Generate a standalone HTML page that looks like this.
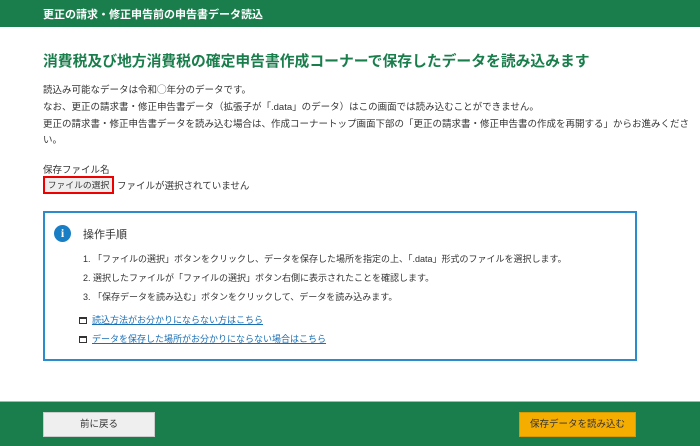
<!DOCTYPE html>
<html><head><meta charset="utf-8"><style>
*{margin:0;padding:0;box-sizing:border-box}
body{width:700px;height:446px;overflow:hidden;background:#fff;font-family:"Liberation Sans","Noto Sans CJK JP",sans-serif;color:#333;position:relative}
.a{position:absolute;white-space:nowrap}
.hd{position:absolute;left:0;top:0;width:700px;height:27px;background:#1a7e4c;color:#fff;font-size:11px;font-weight:bold;padding:6px 0 0 43px}
.t{font-size:14.8px;font-weight:bold;color:#1a7e4c;left:43px;top:50px}
.p{font-size:9.5px;left:43px;color:#333}
.box{position:absolute;left:43px;top:211px;width:594px;height:150px;border:2px solid #2a8ccc}
.box .p{font-size:9px}
.ft{position:absolute;left:0;top:401px;width:700px;height:45px;background:#1a7e4c;border-top:1px solid #9bbfaa}
.btn{position:absolute;top:10px;height:25px;font-size:9.5px;text-align:center;line-height:23px;border:1px solid #ccc}
a{color:#1a6fb5;text-decoration:underline}
.ic{display:inline-block;width:8px;height:7px;border:1.5px solid #333;border-top-width:2.5px;margin-right:5px;vertical-align:-1px}
</style></head><body>
<div class="hd">更正の請求・修正申告前の申告書データ読込</div>
<div class="a t">消費税及び地方消費税の確定申告書作成コーナーで保存したデータを読み込みます</div>
<div class="a p" style="top:82px">読込み可能なデータは令和◯年分のデータです。</div>
<div class="a p" style="top:99px">なお、更正の請求書・修正申告書データ（拡張子が「.data」のデータ）はこの画面では読み込むことができません。</div>
<div class="a p" style="top:116px">更正の請求書・修正申告書データを読み込む場合は、作成コーナートップ画面下部の「更正の請求書・修正申告書の作成を再開する」からお進みくださ</div>
<div class="a p" style="top:132px">い。</div>
<div class="a p" style="top:162px">保存ファイル名</div>
<div class="a" style="left:43px;top:176px;width:71px;height:18px;border:2px solid #e00;background:#eee;font-size:8.8px;text-align:center;line-height:14px">ファイルの選択</div>
<div class="a p" style="left:117px;top:178px">ファイルが選択されていません</div>
<div class="box">
<div class="a" style="left:9px;top:12px;width:17px;height:17px;border-radius:50%;background:#1a7ec4;color:#fff;font-size:12px;font-weight:bold;text-align:center;line-height:17px;font-family:'Liberation Serif',serif">i</div>
<div class="a" style="left:38px;top:13px;font-size:11px">操作手順</div>
<div class="a p" style="left:38px;top:39px">1. 「ファイルの選択」ボタンをクリックし、データを保存した場所を指定の上、「.data」形式のファイルを選択します。</div>
<div class="a p" style="left:38px;top:58px">2. 選択したファイルが「ファイルの選択」ボタン右側に表示されたことを確認します。</div>
<div class="a p" style="left:38px;top:77px">3. 「保存データを読み込む」ボタンをクリックして、データを読み込みます。</div>
<div class="a p" style="left:34px;top:100px"><span class="ic"></span><a>読込方法がお分かりにならない方はこちら</a></div>
<div class="a p" style="left:34px;top:119px"><span class="ic"></span><a>データを保存した場所がお分かりにならない場合はこちら</a></div>
</div>
<div class="ft">
<div class="btn" style="left:43px;width:112px;background:#efefef;color:#333">前に戻る</div>
<div class="btn" style="left:519px;width:117px;background:#f5ad00;border-color:#d99a00;color:#333">保存データを読み込む</div>
</div>
</body></html>
